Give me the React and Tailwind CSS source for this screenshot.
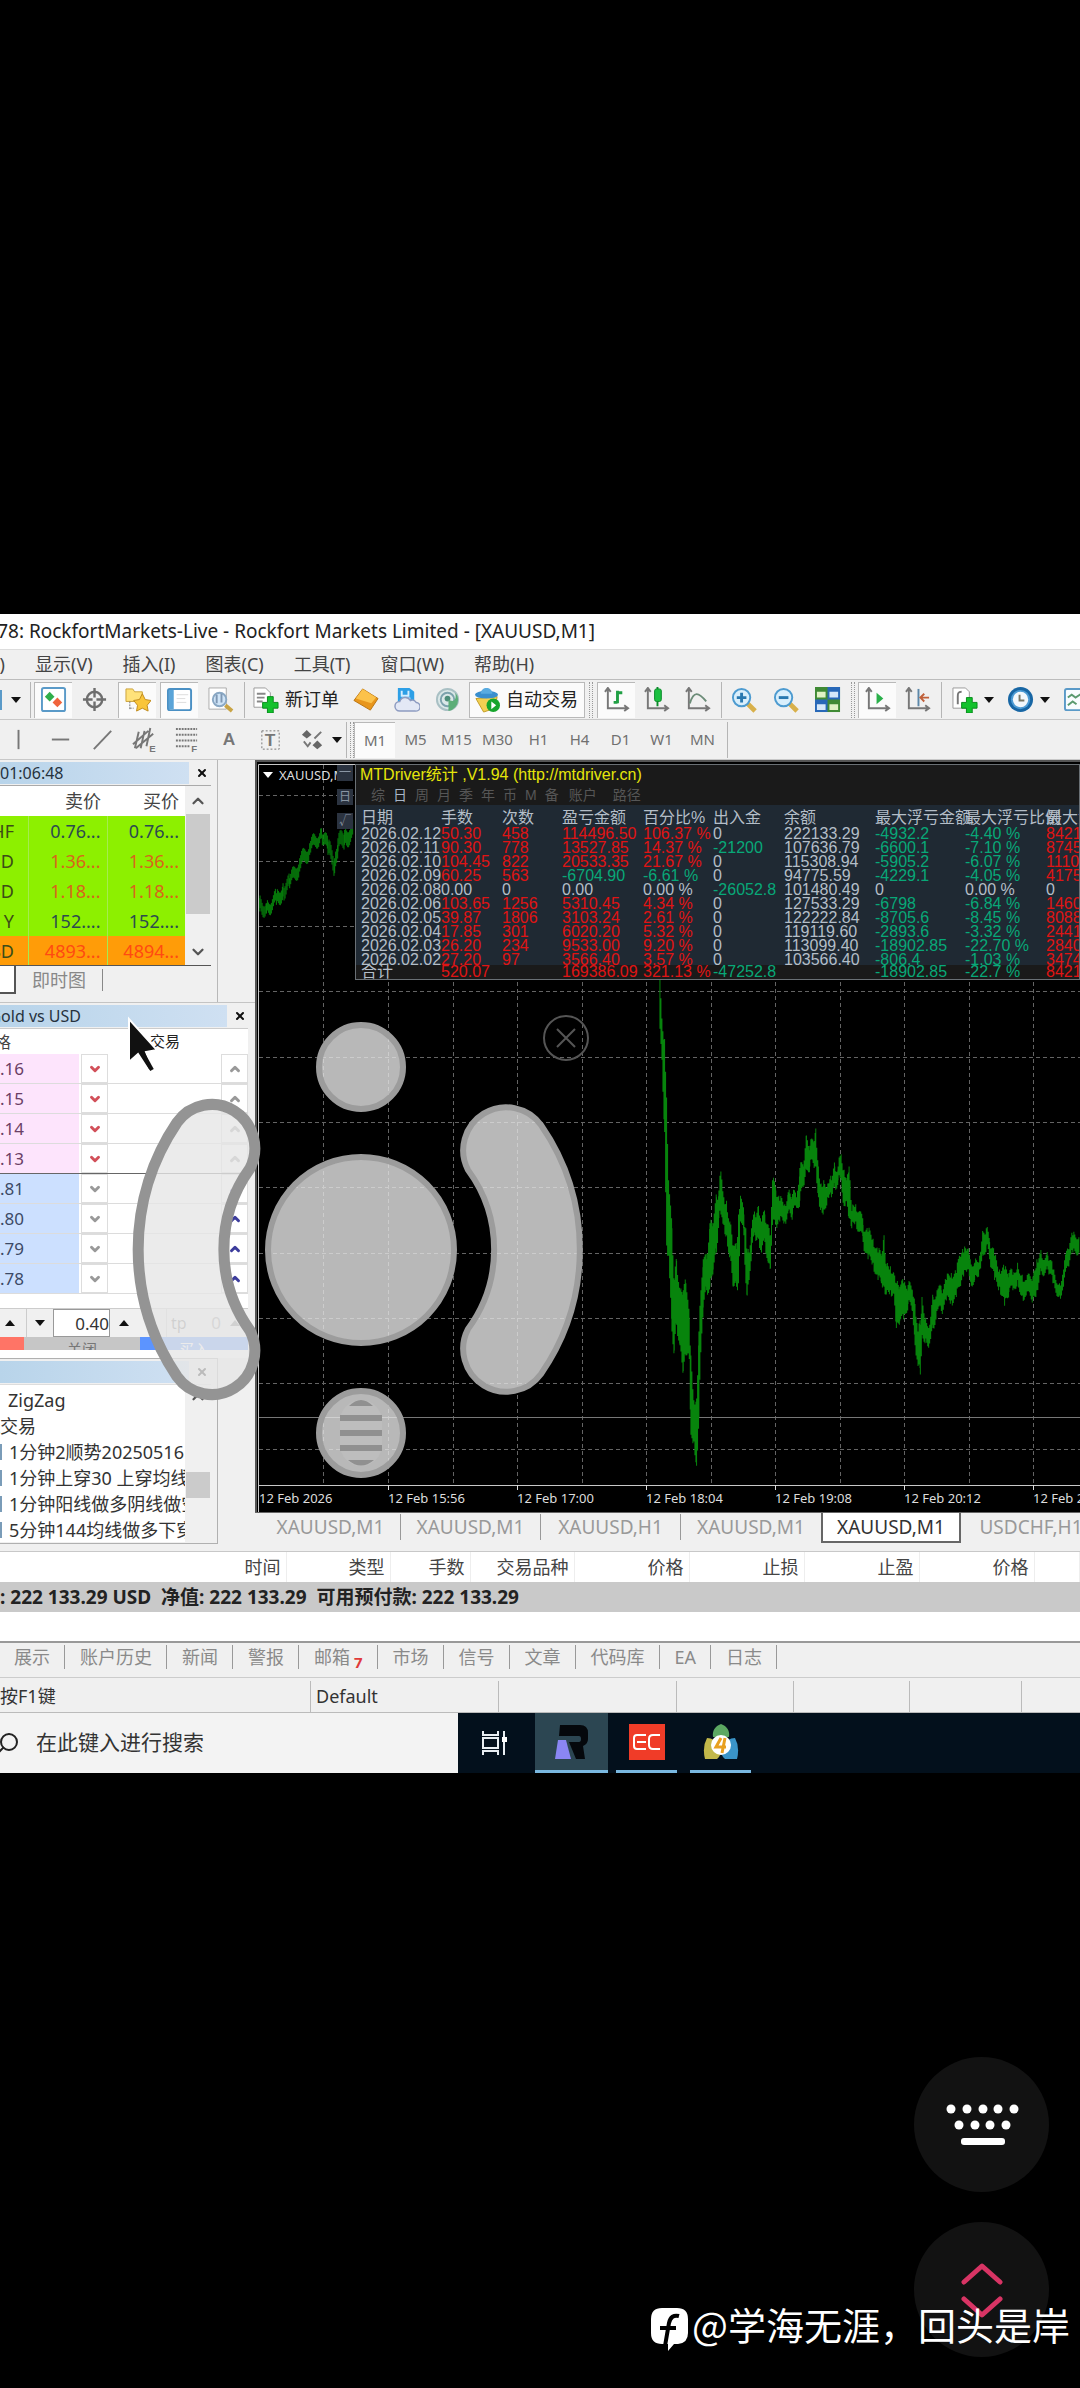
import { ChevronDown, ChevronUp, Search, X } from "lucide-react";

const STATS_HEAD = ["日期", "手数", "次数", "盈亏金额", "百分比%", "出入金", "余额", "最大浮亏金额", "最大浮亏比例", "最大浮盈"];

const STATS = [
    ["2026.02.12", "50.30", "458", "114496.50", "106.37 %", "0", "222133.29", "-4932.2", "-4.40 %", "8421"],
    ["2026.02.11", "90.30", "778", "13527.85", "14.37 %", "-21200", "107636.79", "-6600.1", "-7.10 %", "8745"],
    ["2026.02.10", "104.45", "822", "20533.35", "21.67 %", "0", "115308.94", "-5905.2", "-6.07 %", "1110"],
    ["2026.02.09", "60.25", "563", "-6704.90", "-6.61 %", "0", "94775.59", "-4229.1", "-4.05 %", "4175"],
    ["2026.02.08", "0.00", "0", "0.00", "0.00 %", "-26052.8", "101480.49", "0", "0.00 %", "0"],
    ["2026.02.06", "103.65", "1256", "5310.45", "4.34 %", "0", "127533.29", "-6798", "-6.84 %", "1460"],
    ["2026.02.05", "39.87", "1806", "3103.24", "2.61 %", "0", "122222.84", "-8705.6", "-8.45 %", "8088"],
    ["2026.02.04", "17.85", "301", "6020.20", "5.32 %", "0", "119119.60", "-2893.6", "-3.32 %", "2441"],
    ["2026.02.03", "26.20", "234", "9533.00", "9.20 %", "0", "113099.40", "-18902.85", "-22.70 %", "2840"],
    ["2026.02.02", "27.20", "97", "3566.40", "3.57 %", "0", "103566.40", "-806.4", "-1.03 %", "3474"],
];

const TOTAL = ["合计", "520.07", "", "169386.09", "321.13 %", "-47252.8", "", "-18902.85", "-22.7 %", "8421"];

// [x, high, low]
const OPENING = [
    [778, 430, 470], [800, 445, 475], [830, 415, 450], [850, 385, 425], [870, 370, 400], [900, 310, 350],
    [930, 265, 300], [965, 220, 250], [985, 260, 300], [1005, 310, 355], [1015, 250, 290], [1035, 225, 270], [1062, 205, 250],
];

const SESSION = [
    [180, 55, 200], [186, 170, 290], [194, 230, 500], [200, 400, 830], [206, 640, 860], [216, 780, 1080], [223, 930, 1135],
    [230, 875, 1060], [240, 960, 1120], [250, 960, 1195], [258, 940, 1150], [268, 1040, 1160], [273, 1150, 1380],
    [282, 1280, 1400], [290, 1275, 1470], [297, 1080, 1330], [303, 960, 1140], [310, 870, 1010], [320, 870, 960],
    [330, 765, 950], [340, 765, 900], [350, 690, 850], [357, 670, 750], [363, 615, 740], [372, 690, 770], [380, 700, 800],
    [390, 760, 860], [400, 830, 950], [410, 840, 950], [416, 740, 940], [422, 685, 760], [432, 740, 800], [438, 780, 940],
    [442, 850, 975], [448, 850, 930], [455, 780, 850], [465, 740, 800], [476, 715, 810], [485, 760, 850], [495, 740, 820],
    [505, 770, 880], [512, 800, 895], [518, 640, 770], [528, 670, 770], [540, 700, 760], [555, 710, 760], [565, 675, 730],
    [578, 680, 740], [590, 690, 720], [600, 605, 700], [610, 600, 660], [620, 510, 610], [630, 540, 600], [640, 530, 590],
    [648, 490, 600], [656, 600, 690], [664, 650, 720], [672, 640, 725], [684, 650, 690], [695, 640, 690], [705, 600, 660],
    [715, 600, 640], [724, 565, 640], [733, 610, 715], [740, 640, 700], [748, 600, 750], [756, 730, 780], [768, 710, 760],
    [780, 730, 790], [790, 770, 820], [805, 790, 870], [820, 810, 880], [835, 850, 930], [845, 860, 940], [853, 800, 950],
    [860, 890, 970], [872, 890, 960], [882, 910, 970], [890, 940, 1070], [900, 950, 1050], [912, 940, 1045], [925, 945, 1000],
    [938, 960, 1020], [946, 1000, 1120], [955, 1080, 1180], [962, 1060, 1205], [967, 980, 1090], [978, 1040, 1100],
    [990, 1060, 1115], [1000, 980, 1070], [1012, 960, 1020], [1025, 960, 1020], [1040, 930, 990], [1055, 910, 990],
    [1070, 910, 980], [1080, 860, 950], [1092, 850, 920], [1103, 840, 900], [1112, 870, 935], [1125, 880, 930],
    [1140, 860, 900], [1150, 790, 860], [1160, 780, 830], [1170, 820, 870], [1185, 860, 930], [1200, 900, 950],
    [1215, 900, 1005], [1228, 910, 965], [1240, 915, 960], [1254, 880, 930], [1268, 915, 975], [1280, 930, 975],
    [1300, 920, 985], [1312, 870, 960], [1325, 855, 905], [1345, 860, 900], [1360, 900, 940], [1380, 940, 975],
    [1392, 900, 950], [1405, 840, 890], [1420, 800, 850], [1440, 795, 840],
];

function bars(points) {
    let d = "";
    for (let i = 0; i < points.length - 1; i++) {
        const [x0, h0, l0] = points[i];
        const [x1, h1, l1] = points[i + 1];
        for (let x = x0; x < x1; x += 3) {
            const t = (x - x0) / (x1 - x0);
            const wave = x === x0 ? 0 : Math.sin(x * 2.3) * 16;
            d += `M${x} ${Math.round(h0 + (h1 - h0) * t + wave)}V${Math.round(l0 + (l1 - l0) * t + wave)}`;
        }
    }
    return d;
}

const V_LINES = [68, 133, 198, 262, 327, 391, 456, 520, 585, 649, 714, 778];
const H_LINES = [35, 101, 166, 231, 297, 362, 427, 493, 558, 623, 689];

function PriceChart() {
    return (
        <svg className="absolute inset-0 h-full w-full" viewBox="0 0 825 752" preserveAspectRatio="xMinYMin slice" fill="none">
            <g stroke="#646464" strokeDasharray="4 3">
                {V_LINES.map((x) => <path key={x} d={`M${x}.5 5V725`} />)}
                {H_LINES.map((y) => <path key={y} d={`M4 ${y}.5H1600`} />)}
            </g>
            <path d="M4 657.5H1600" stroke="#777" />
            <g stroke="#07840c" strokeWidth="3">
                <path transform="translate(-255 -5) scale(.333)" d={bars(OPENING)} />
                <path transform="translate(345 200) scale(.333 .344)" d={bars(SESSION)} />
            </g>
            <path d="M1 752V1H1600" stroke="#555" strokeWidth="2" />
            <path d="M3.5 752V4.5H1600M3.5 725.5H1600" stroke="#c8c8c8" />
            {[133, 262, 391, 520, 649, 778].map((x) => <path key={x} d={`M${x}.5 725v5`} stroke="#ddd" />)}
        </svg>
    );
}

function cellColor(value, col) {
    if (col === 0 || col === 6 || value === "0" || value.startsWith("0.00")) return "text-[#b4bec8]";
    if (value.startsWith("-")) return "text-[#08a878]";
    return "text-[#e01414]";
}

function Stats() {
    return (
        <div className="absolute top-[4px] right-0 left-[100px] h-[216px] overflow-hidden border border-[#6a7075] bg-[#1a1a1a] font-['Liberation_Sans','Noto_Sans_CJK_SC',sans-serif]">
            <a href="#stats" className="block h-5 pl-1 text-[16px] leading-5 whitespace-nowrap text-[#e6e60a]">
                MTDriver统计 ,V1.94 (http://mtdriver.cn)
            </a>
            <div className="flex h-5 items-center gap-2 pl-[15px] text-[14px] leading-5 text-[#565656]">
                {["综", "日", "周", "月", "季", "年", "币", "M", "备", "账户", "路径"].map((t) => (
                    <button key={t} className={t === "日" ? "text-[#a8b6c8]" : t === "账户" ? "ml-[2px]" : t === "路径" ? "ml-2" : ""}>{t}</button>
                ))}
            </div>
            <div className="h-[160px] overflow-hidden bg-[#1f2933] pt-1">
                <StatsTable head={STATS_HEAD} rows={STATS} />
            </div>
            <StatsTable rows={[TOTAL]} />
        </div>
    );
}

function StatsTable({ head, rows }) {
    return (
        <table className="ml-[5px] w-[770px] table-fixed text-left text-[16px] leading-[14px] whitespace-nowrap">
            <colgroup>
                <col className="w-[80px]" /><col className="w-[61px]" /><col className="w-[60px]" /><col className="w-[81px]" />
                <col className="w-[70px]" /><col className="w-[71px]" /><col className="w-[91px]" /><col className="w-[90px]" />
                <col className="w-[81px]" /><col />
            </colgroup>
            {head && (
                <thead>
                    <tr className="h-[18px] text-[#b4bec8]">
                        {head.map((h) => <th key={h} className="p-0 font-normal">{h}</th>)}
                    </tr>
                </thead>
            )}
            <tbody>
                {rows.map((r) => (
                    <tr key={r[0]} className="h-[14px]">
                        {r.map((v, i) => <td key={i} className={`p-0 ${cellColor(v, i)}`}>{v}</td>)}
                    </tr>
                ))}
            </tbody>
        </table>
    );
}

function Arrow({ up }) {
    return (
        <svg width="10" height="6" viewBox="0 0 10 6" className="shrink-0">
            <path d={up ? "M0 6L5 0L10 6Z" : "M0 0L5 6L10 0Z"} fill="#111" />
        </svg>
    );
}

function Sep() {
    return <span className="h-9 w-px shrink-0 bg-[#b5b5b5]" />;
}

function Grip() {
    return <span className="h-9 w-[4px] shrink-0 border-x border-dotted border-[#999]" />;
}

const ICONS = {
    watch: (
        <>
            <rect x="1" y="1" width="24" height="24" rx="2" fill="#fff" stroke="#5a9ac8" strokeWidth="2" />
            <path d="M9 5l5 5-5 5-5-5z" fill="#2fae4a" /><path d="M17 11l5 5-5 5-5-5z" fill="#f0643c" />
        </>
    ),
    cross: (
        <g fill="none" stroke="#6e6e6e" strokeWidth="2.5">
            <circle cx="13" cy="13" r="8" /><path d="M13 1v10M13 15v10M1 13h10M15 13h10" />
        </g>
    ),
    star: (
        <>
            <path d="M1 2h7l2 3h8v10H1z" fill="#ffe27a" stroke="#caa13a" />
            <path d="M5 15v9M5 22h4" stroke="#777" strokeDasharray="2 1" />
            <path d="M18 7l3 6 6 1-4 5 1 6-6-3-6 3 1-6-4-5 6-1z" fill="#f9c53a" stroke="#c08a1c" />
        </>
    ),
    terminal: (
        <>
            <rect x="1" y="2" width="24" height="22" rx="2" fill="#fff" stroke="#4a90c4" strokeWidth="2" />
            <path d="M2 3h5v20H2z" fill="#5aa4d8" /><path d="M10 8h12M10 12h9M10 16h10" stroke="#ddd" />
        </>
    ),
    tester: (
        <>
            <path d="M1 1h18v22H1z" fill="#fff" stroke="#aaa" />
            <circle cx="12" cy="13" r="7" fill="#cfe4f7" stroke="#8aa8c4" strokeWidth="2" />
            <path d="M9 8v9M14 7v9" stroke="#7f98b4" strokeWidth="2" /><path d="M18 19l7 6" stroke="#c9a445" strokeWidth="4" />
        </>
    ),
    order: (
        <>
            <path d="M1 1h12l5 5v15H1z" fill="#fff" stroke="#999" /><path d="M4 7h9M4 11h8M4 15h6" stroke="#888" strokeWidth="2" />
            <path d="M15 10h6v6h5v6h-5v5h-6v-5h-5v-6h5z" fill="#12c22c" stroke="#068a1a" />
        </>
    ),
    book: (
        <>
            <path d="M10 2l16 10-8 12L1 14z" fill="#e8961c" stroke="#b9740f" /><path d="M10 2l14 9-5 6L3 12z" fill="#fcc24a" />
        </>
    ),
    cloud: (
        <>
            <path d="M4 1h12l5 4v11H4z" fill="#2d9fe6" /><path d="M8 4v5h7V4M8 12h9" stroke="#d7efff" strokeWidth="2" fill="none" />
            <path d="M6 25a5 5 0 010-10 6 6 0 0111-1 5 5 0 016 2 4 4 0 01-1 9z" fill="#e3e8f5" stroke="#8d9bc0" strokeWidth="1.5" />
        </>
    ),
    signal: (
        <g fill="none" strokeWidth="2">
            <circle cx="13" cy="13" r="11" fill="#dbe8e8" stroke="#a9c0c4" /><circle cx="13" cy="13" r="7" stroke="#7da3ad" />
            <circle cx="13" cy="12" r="3" fill="#4d8d7a" stroke="none" /><path d="M14 13v12a12 12 0 0010-12 10 10 0 00-3-7c2 9-3 10-7 7z" fill="#5cae78" stroke="none" />
        </g>
    ),
    auto: (
        <>
            <path d="M2 12l22-2-2 12-12 4z" fill="#f2d052" stroke="#c29b24" /><ellipse cx="13" cy="8" rx="12" ry="4" fill="#3a8fce" />
            <path d="M7 7c0-8 12-8 12 0z" fill="#59abe0" /><circle cx="20" cy="19" r="7" fill="#16a52c" /><path d="M18 15l5 4-5 4z" fill="#fff" />
        </>
    ),
    bar: (
        <>
            <path d="M4 2v20h20M1 5l3-4 3 4M21 19l4 3-4 3" fill="none" stroke="#777" strokeWidth="2" />
            <path d="M14 4v13M14 6h5M10 16h4" stroke="#21a045" strokeWidth="3" />
        </>
    ),
    candle: (
        <>
            <path d="M4 2v20h20M1 5l3-4 3 4M21 19l4 3-4 3" fill="none" stroke="#777" strokeWidth="2" />
            <path d="M14 0v20" stroke="#0a8a2a" strokeWidth="2" /><rect x="11" y="2" width="7" height="13" rx="2" fill="#1cc040" stroke="#0a8a2a" />
        </>
    ),
    line: (
        <>
            <path d="M4 2v20h20M1 5l3-4 3 4M21 19l4 3-4 3" fill="none" stroke="#777" strokeWidth="2" />
            <path d="M5 17C9 4 14 5 22 15" fill="none" stroke="#6c8c78" strokeWidth="2" />
        </>
    ),
    zoomIn: (
        <>
            <path d="M17 17l8 8" stroke="#d8b04a" strokeWidth="5" /><circle cx="11" cy="11" r="9" fill="#d9effc" stroke="#4d9bd0" strokeWidth="2" />
            <path d="M11 6v10M6 11h10" stroke="#2878b0" strokeWidth="3" />
        </>
    ),
    zoomOut: (
        <>
            <path d="M17 17l8 8" stroke="#d8b04a" strokeWidth="5" /><circle cx="11" cy="11" r="9" fill="#d9effc" stroke="#4d9bd0" strokeWidth="2" />
            <path d="M6 11h10" stroke="#2878b0" strokeWidth="3" />
        </>
    ),
    tiles: (
        <>
            <path d="M0 0h26v26H0z" fill="#3f8a34" /><path d="M13 0h13v13H13zM0 13h13v13H0z" fill="#2868b8" />
            <path d="M2 5h9v6H2zM15 18h9v6h-9z" fill="#dff2c4" /><path d="M15 5h9v6h-9zM2 18h9v6H2z" fill="#d6e8fa" />
        </>
    ),
    scroll: (
        <>
            <path d="M4 2v20h20M1 5l3-4 3 4M21 19l4 3-4 3" fill="none" stroke="#777" strokeWidth="2" /><path d="M12 6l7 6-7 6z" fill="#2ab04a" />
        </>
    ),
    shift: (
        <>
            <path d="M4 2v20h20M1 5l3-4 3 4M21 19l4 3-4 3" fill="none" stroke="#777" strokeWidth="2" />
            <path d="M14 2v18" stroke="#5c87a8" strokeWidth="2" /><path d="M25 11h-8M20 7l-4 4 4 4" stroke="#c0603a" strokeWidth="2" fill="none" />
        </>
    ),
    addChart: (
        <>
            <path d="M1 1h13l4 4v17H1z" fill="#fff" stroke="#999" /><path d="M10 5c-4 0-4 2-4 5v8" stroke="#777" strokeWidth="2" fill="none" />
            <path d="M15 11h6v5h5v6h-5v5h-6v-5h-5v-6h5z" fill="#12c22c" stroke="#068a1a" />
        </>
    ),
    clock: (
        <>
            <circle cx="13" cy="13" r="13" fill="#1766a4" /><circle cx="13" cy="13" r="10" fill="#4c9bd4" />
            <circle cx="13" cy="13" r="8" fill="#f2f8fc" /><path d="M12 8v6h5" stroke="#776" strokeWidth="2" fill="none" />
        </>
    ),
    template: (
        <>
            <rect x="1" y="2" width="24" height="22" rx="2" fill="#f8fcff" stroke="#5a9ac8" strokeWidth="2" />
            <path d="M4 11l4-3 4 3 6-4M4 19l5-4 4 3" stroke="#5a9a70" strokeWidth="2" fill="none" />
        </>
    ),
    vline: <path d="M13 3v20" stroke="#777" strokeWidth="2" />,
    hline: <path d="M4 13h18" stroke="#777" strokeWidth="2" />,
    trend: <path d="M4 23L22 4" stroke="#777" strokeWidth="2" />,
    channel: (
        <>
            <path d="M1 18L17 4M4 22L22 7M7 5L3 22M13 4L9 22M19 1L15 20" stroke="#777" strokeWidth="2" />
            <text x="18" y="26" fontSize="10" fontWeight="bold" fill="#777" fontFamily="Liberation Sans">E</text>
        </>
    ),
    fibo: (
        <>
            <path d="M2 2h22M2 8h22M2 14h22M2 20h15" stroke="#777" strokeWidth="2" strokeDasharray="2 1" />
            <text x="18" y="26" fontSize="10" fontWeight="bold" fill="#777" fontFamily="Liberation Sans">F</text>
        </>
    ),
    text: <text x="7" y="19" fontSize="18" fontWeight="bold" fill="#777" fontFamily="Liberation Sans">A</text>,
    label: (
        <>
            <rect x="4" y="4" width="18" height="19" fill="none" stroke="#777" strokeDasharray="2 2" />
            <text x="7" y="20" fontSize="18" fontWeight="bold" fill="#777" fontFamily="Liberation Sans">T</text>
        </>
    ),
    shapes: (
        <>
            <path d="M7 3l5 5-5 4-5-4z" fill="#666" /><path d="M18 14l5 5-5 4-5-4z" fill="#666" />
            <path d="M4 15l4 5 3-4M15 12l7-7" stroke="#777" strokeWidth="2" fill="none" />
        </>
    ),
};

function Tool({ icon, label, active }) {
    return (
        <button
            aria-label={label}
            className={`flex h-9 w-[38px] shrink-0 items-center justify-center ${active ? "border-t border-l border-[#b9b9b9] bg-[#fbfbfb]" : ""}`}
        >
            <svg width="26" height="26" viewBox="0 0 27 27">{ICONS[icon]}</svg>
        </button>
    );
}

function Toolbar() {
    return (
        <div className="flex h-10 items-center overflow-hidden border-t border-[#bcbcbc] text-[18px] whitespace-nowrap text-[#222]">
            <span className="h-5 w-[2px] shrink-0 bg-[#5a9ac8]" />
            <button aria-label="新建图表" className="flex w-7 shrink-0 justify-center"><Arrow /></button>
            <Sep />
            <div className="ml-[3px] flex gap-[4px]">
                <Tool icon="watch" label="市场报价" active />
                <Tool icon="cross" label="数据窗口" />
                <Tool icon="star" label="导航" active />
                <Tool icon="terminal" label="终端" active />
                <Tool icon="tester" label="策略测试" />
            </div>
            <span className="w-1 shrink-0" />
            <Sep />
            <button className="flex shrink-0 items-center gap-[6px] px-2">
                <svg width="26" height="26" viewBox="0 0 27 27">{ICONS.order}</svg>
                新订单
            </button>
            <div className="flex gap-[3px]">
                <Tool icon="book" label="MetaEditor" />
                <Tool icon="cloud" label="云端" />
                <Tool icon="signal" label="信号" />
            </div>
            <button className="ml-[2px] flex h-9 w-[116px] shrink-0 items-center gap-[6px] border border-[#b9b9b9] bg-[#fbfbfb] pl-1">
                <svg width="26" height="26" viewBox="0 0 27 27">{ICONS.auto}</svg>
                自动交易
            </button>
            <span className="w-1 shrink-0" />
            <Grip />
            <div className="ml-[4px] flex gap-[3px]">
                <Tool icon="bar" label="柱状图" active />
                <Tool icon="candle" label="阴阳烛" />
                <Tool icon="line" label="折线图" />
            </div>
            <span className="w-1 shrink-0" />
            <Sep />
            <div className="ml-[3px] flex gap-[4px]">
                <Tool icon="zoomIn" label="放大" />
                <Tool icon="zoomOut" label="缩小" />
                <Tool icon="tiles" label="平铺" />
            </div>
            <span className="w-1 shrink-0" />
            <Grip />
            <div className="ml-[3px] flex gap-[3px]">
                <Tool icon="scroll" label="自动滚动" active />
                <Tool icon="shift" label="图表平移" />
            </div>
            <span className="w-1 shrink-0" />
            <Sep />
            <span className="w-1 shrink-0" />
            <Tool icon="addChart" label="指标" /><Arrow />
            <span className="w-2 shrink-0" />
            <Tool icon="clock" label="周期" /><Arrow />
            <span className="w-2 shrink-0" />
            <Tool icon="template" label="模板" />
        </div>
    );
}

function DrawingBar() {
    return (
        <div className="flex h-[41px] items-center overflow-hidden border-y border-[#c8c8c8] text-[15px] text-[#707070]">
            <div className="flex gap-[4px]">
                <Tool icon="vline" label="垂直线" />
                <Tool icon="hline" label="水平线" />
                <Tool icon="trend" label="趋势线" />
                <Tool icon="channel" label="通道" />
                <Tool icon="fibo" label="斐波那契" />
                <Tool icon="text" label="文字" />
                <Tool icon="label" label="文字标签" />
                <Tool icon="shapes" label="箭头" />
            </div>
            <Arrow />
            <span className="w-1 shrink-0" />
            <Sep />
            <span className="w-[3px] shrink-0" />
            <Grip />
            <div className="flex">
                {["M1", "M5", "M15", "M30", "H1", "H4", "D1", "W1", "MN"].map((t, i) => (
                    <button key={t} className={`h-9 w-[41px] ${i === 0 ? "border-t border-l border-[#b9b9b9] bg-[#fbfbfb]" : ""}`}>{t}</button>
                ))}
            </div>
            <span className="w-1 shrink-0" />
            <Sep />
        </div>
    );
}

function PanelTitle({ children, label }) {
    return (
        <div className="flex h-[25px] items-center">
            <div className="flex h-[22px] flex-1 items-center bg-gradient-to-r from-[#b8d4ea] to-[#cfe0f2] text-[16px] text-[#26323e]">
                {children}
            </div>
            <button aria-label={label} className="mr-[9px] ml-[7px] text-[#111]"><X size={12} strokeWidth={4} /></button>
        </div>
    );
}

const QUOTES = [
    ["USDCHF", "HF", "0.76...", "0.76...", "bg-[#8df000] text-[#2c4a50]"],
    ["GBPUSD", "D", "1.36...", "1.36...", "bg-[#8df000] text-[#d8641c]"],
    ["EURUSD", "D", "1.18...", "1.18...", "bg-[#8df000] text-[#d8641c]"],
    ["USDJPY", "Y", "152....", "152....", "bg-[#8df000] text-[#2c4a50]"],
    ["XAUUSD", "SD", "4893...", "4894...", "bg-[#ff9c08] text-[#ff4a12]"],
];

function MarketWatch() {
    return (
        <section className="h-[242px] w-[218px] border-r border-[#b8b8b8]">
            <PanelTitle label="关闭市场报价">01:06:48</PanelTitle>
            <div className="mr-[6px] flex h-[181px] overflow-hidden border-t border-b border-t-[#aaa] border-b-[#555]">
                <table className="w-[185px] table-fixed bg-white text-right text-[18px]">
                    <colgroup><col className="w-[28px]" /><col className="w-[79px]" /><col /></colgroup>
                    <thead>
                        <tr className="h-[30px] text-[#444]">
                            <th className="p-0" />
                            <th className="p-0 pr-[6px] font-normal">卖价</th>
                            <th className="p-0 pr-[6px] font-normal">买价</th>
                        </tr>
                    </thead>
                    <tbody>
                        {QUOTES.map(([id, name, bid, ask, tone]) => (
                            <tr key={id} className={`h-[30px] ${tone}`}>
                                <td className="p-0 whitespace-nowrap"><span className="flex w-[14px] justify-end text-[#3c4c18]">{name}</span></td>
                                <td className="border-l border-[#a4ec50] p-0 pr-[6px]">{bid}</td>
                                <td className="border-l border-[#a4ec50] p-0 pr-[6px]">{ask}</td>
                            </tr>
                        ))}
                    </tbody>
                </table>
                <div className="flex flex-1 flex-col items-center bg-[#f0f0f0] pt-[6px] pb-1 text-[#555]">
                    <ChevronUp size={18} strokeWidth={3} />
                    <div className="mt-1 h-[100px] w-6 bg-[#cbcbcb]" />
                    <span className="flex-1" />
                    <ChevronDown size={18} strokeWidth={3} />
                </div>
            </div>
            <div className="flex h-[28px] text-[18px] text-[#888]">
                <button className="w-4 border-r-2 border-b-2 border-[#555] bg-white" aria-label="交易品种" />
                <button className="px-4">即时图</button>
                <span className="h-[22px] w-px self-center bg-[#888]" />
            </div>
        </section>
    );
}

const DEPTH = ["4.16", "4.15", "4.14", "4.13", "3.81", "3.80", "3.79", "3.78"];

function Depth() {
    return (
        <section className="h-[356px] overflow-hidden border-t border-[#c4c4c4] bg-[#f0f0f0]">
            <PanelTitle label="关闭深度">
                <span className="flex w-[81px] justify-end whitespace-nowrap">Gold vs USD</span>
            </PanelTitle>
            <div className="mr-[7px] border-t border-[#ccc] bg-white text-[16px]">
                <div className="flex h-[25px] items-center text-[#444]">
                    <span className="flex w-[11px] justify-end whitespace-nowrap">价格</span>
                    <span className="flex-1 pr-[68px] text-right text-[15px] text-[#222]">交易</span>
                </div>
                {DEPTH.map((p, i) => (
                    <div key={p} className={`flex h-[30px] border-b ${i === 3 ? "border-[#666]" : "border-[#dcdcdc]"}`}>
                        <span className={`flex w-[79px] items-center text-[17px] ${i < 4 ? "bg-[#fde4fc] text-[#6b3f66]" : "bg-[#cce0ff] text-[#3c4a66]"}`}>
                            <span className="flex w-6 justify-end">{p}</span>
                        </span>
                        <button aria-label={`卖出 ${p}`} className={`ml-[2px] flex w-[27px] items-center justify-center border border-[#ddd] ${i < 4 ? "text-[#d2505a]" : "text-[#999]"}`}>
                            <ChevronDown size={14} strokeWidth={5} />
                        </button>
                        <span className="flex-1" />
                        <button aria-label={`买入 ${p}`} className={`flex w-[27px] items-center justify-center border border-[#ddd] ${i < 4 ? "text-[#999]" : "text-[#3c3c9c]"}`}>
                            <ChevronUp size={14} strokeWidth={5} />
                        </button>
                    </div>
                ))}
                <div className="h-[14px]" />
                <div className="flex h-[29px] items-center border-t border-[#ccc] bg-[#f0f0f0]">
                    <button aria-label="止损加" className="flex h-full w-[26px] items-center pl-[5px]"><Arrow up /></button>
                    <button aria-label="手数减" className="flex h-full w-[27px] items-center justify-center border-l border-[#ccc]"><Arrow /></button>
                    <input aria-label="手数" defaultValue="0.40" className="h-full w-[57px] border border-[#999] bg-white text-right text-[17px] text-[#333]" />
                    <button aria-label="手数加" className="flex h-full w-[28px] items-center justify-center"><Arrow up /></button>
                    <span className="w-7" />
                    <input aria-label="止盈" placeholder="tp" className="h-full w-[30px] border-l border-[#ccc] bg-[#f0f0f0] pl-1 text-[16px]" />
                    <span className="w-[25px] text-right text-[17px] text-[#999]">0</span>
                    <span className="flex flex-1 justify-center opacity-50"><Arrow up /></span>
                </div>
                <div className="flex h-[13px] overflow-hidden text-[15px] leading-[24px]">
                    <button aria-label="卖出" className="w-[24px] bg-[#ff7466]" />
                    <button className="w-[116px] bg-[#c6c6c6] text-[#777]">关闭</button>
                    <button className="flex-1 bg-[#5c94ff] text-[#fff]">买入</button>
                </div>
                <div className="h-2" />
            </div>
        </section>
    );
}

function Navigator() {
    return (
        <section className="h-[186px] w-[218px] border-t border-r border-b border-[#b0b0b0]">
            <PanelTitle label="关闭导航">&nbsp;</PanelTitle>
            <div className="mr-[6px] flex h-[158px] overflow-hidden border-t border-[#ddd]">
                <ul className="w-[185px] overflow-hidden bg-white pt-[2px] text-[18px] leading-[26px] whitespace-nowrap text-[#333]">
                    <li className="pl-2">ZigZag</li>
                    <li className="flex w-9 justify-end">EA交易</li>
                    {["1分钟2顺势20250516", "1分钟上穿30 上穿均线", "1分钟阳线做多阴线做空", "5分钟144均线做多下穿"].map((t) => (
                        <li key={t} className="flex items-center gap-[7px]">
                            <span className="h-4 w-[2px] shrink-0 bg-[#7a9cb8]" />{t}
                        </li>
                    ))}
                </ul>
                <div className="flex flex-1 flex-col items-center bg-[#f0f0f0] pt-[3px] text-[#555]">
                    <ChevronUp size={18} strokeWidth={3} />
                    <div className="mt-[66px] h-[26px] w-6 bg-[#cbcbcb]" />
                </div>
            </div>
        </section>
    );
}

function ChartPanel() {
    return (
        <div className="flex min-w-0 flex-1 flex-col">
            <div className="relative h-[752px] overflow-hidden bg-black">
                <PriceChart />
                <div className="absolute top-[6px] left-2 flex items-center gap-[6px] font-['Noto_Sans',sans-serif] text-[13px] leading-[18px] text-[#ddd]">
                    <svg width="10" height="6" viewBox="0 0 10 6"><path d="M0 0L5 6L10 0Z" fill="#fff" /></svg>
                    XAUUSD,M1
                </div>
                <div className="absolute top-[5px] left-[82px] flex flex-col gap-2 text-[12px] leading-4 text-[#8a96a4]">
                    {["一", "日", "√"].map((t) => (
                        <button key={t} className="h-4 w-4 bg-[#2b3340]">{t}</button>
                    ))}
                </div>
                <Stats />
                <div className="absolute right-0 bottom-[4px] left-[4px] flex h-5 overflow-hidden text-[13px] leading-5 whitespace-nowrap text-[#ddd]">
                    {["12 Feb 2026", "12 Feb 15:56", "12 Feb 17:00", "12 Feb 18:04", "12 Feb 19:08", "12 Feb 20:12", "12 Feb 21:16"].map((t) => (
                        <span key={t} className="w-[129px] shrink-0">{t}</span>
                    ))}
                </div>
            </div>
            <div className="flex h-[39px] overflow-hidden border-t border-[#666] pl-[6px] text-[19px] whitespace-nowrap text-[#999]">
                {["XAUUSD,M1", "XAUUSD,M1", "XAUUSD,H1", "XAUUSD,M1", "XAUUSD,M1", "USDCHF,H1"].map((t, i) => (
                    <button
                        key={i}
                        className={
                            i === 4
                                ? "h-[30px] w-[140px] shrink-0 border-x-2 border-b-2 border-[#666] bg-white leading-[26px] text-[#333]"
                                : `my-px h-[26px] w-[140px] shrink-0 leading-[26px] ${i < 3 ? "border-r border-[#999]" : ""}`
                        }
                    >
                        {t}
                    </button>
                ))}
            </div>
        </div>
    );
}

function Terminal() {
    return (
        <section className="border-t border-[#c8c8c8] bg-white">
            <table className="w-full table-fixed text-right text-[18px] whitespace-nowrap">
                <colgroup>
                    <col className="w-[286px]" /><col className="w-[104px]" /><col className="w-[80px]" /><col className="w-[104px]" />
                    <col className="w-[115px]" /><col className="w-[115px]" /><col className="w-[115px]" /><col className="w-[115px]" /><col />
                </colgroup>
                <thead>
                    <tr className="h-[30px] text-[#444]">
                        {["时间", "类型", "手数", "交易品种", "价格", "止损", "止盈", "价格", ""].map((h, i) => (
                            <th key={i} className="border-r border-[#eee] p-0 pr-[5px] font-normal">{h}</th>
                        ))}
                    </tr>
                </thead>
                <tbody>
                    <tr className="h-[30px] bg-[#c9c9c9]">
                        <td colSpan={9} className="p-0 text-left text-[19px] font-bold text-[#222]">
                            <span className="whitespace-pre">: 222 133.29 USD  净值: 222 133.29  可用预付款: 222 133.29</span>
                        </td>
                    </tr>
                </tbody>
            </table>
            <div className="h-[29px]" />
            <nav className="flex h-[37px] items-start gap-px border-t-2 border-b border-t-[#999] border-b-[#ccc] bg-[#f0f0f0] pt-[2px] text-[18px] text-[#8a8a8a]">
                {["展示", "账户历史", "新闻", "警报", "邮箱", "市场", "信号", "文章", "代码库", "EA", "日志"].map((t) => (
                    <button key={t} className="h-6 border-r border-[#999] px-[14px] leading-6 whitespace-nowrap">
                        {t}
                        {t === "邮箱" && <sub className="pl-1 text-[15px] font-bold text-[#e03a3a]">7</sub>}
                    </button>
                ))}
            </nav>
        </section>
    );
}

function StatusBar() {
    return (
        <footer className="flex h-[35px] items-end border-b border-[#bbb] bg-[#f0f0f0] text-[18px] leading-[30px] whitespace-nowrap text-[#333]">
            <span className="flex h-[31px] w-[311px] border-r border-[#bbb]">按F1键</span>
            <span className="h-[31px] w-[188px] border-r border-[#bbb] pl-[5px]">Default</span>
            <span className="h-[31px] w-[177px]" />
            <span className="h-[31px] w-[118px] border-x border-[#bbb]" />
            <span className="h-[31px] w-[116px] border-r border-[#bbb]" />
            <span className="h-[31px] w-[112px] border-r border-[#bbb]" />
        </footer>
    );
}

function Taskbar() {
    return (
        <div className="flex h-[60px] items-stretch bg-[#03101c]">
            <label className="flex w-[458px] shrink-0 items-center bg-[#f3f3f3]">
                <Search size={24} strokeWidth={2} className="-ml-1 -scale-x-100 text-[#222]" />
                <input aria-label="搜索" placeholder="在此键入进行搜索" className="ml-4 w-[300px] text-[21px] outline-none placeholder:text-[#333]" />
            </label>
            <button aria-label="任务视图" className="flex w-[77px] items-center justify-center pr-1">
                <svg width="26" height="24" viewBox="0 0 26 24" fill="none" stroke="#e8eef2" strokeWidth="2">
                    <path d="M1 0v4h15V0M1 24v-4h15v4M1 7h15v10H1zM22 0v24" /><path d="M20 6h5v5h-5z" fill="#fff" stroke="none" />
                </svg>
            </button>
            <button aria-label="R" className="flex w-[73px] items-center justify-center border-b-3 border-[#7ab8e0] bg-[#2c4652]">
                <svg width="36" height="36" viewBox="0 0 36 36">
                    <path d="M6 1h20q8 0 8 8v6q0 5-5 7l2 13h-9L15 18h10q2 0 2-3t-2-3H5z" fill="#05080c" />
                    <path d="M4 16h8l5 19H1z" fill="#8a86f4" />
                </svg>
            </button>
            <button aria-label="EC" className="ml-2 flex w-[61px] items-center justify-center border-b-3 border-[#7ab8e0]">
                <svg width="36" height="36" viewBox="0 0 36 36" fill="none" stroke="#fff" strokeWidth="2">
                    <path d="M0 0h36v36H0z" fill="#f03c28" stroke="none" />
                    <path d="M17 11H8q-3 0-3 3v8q0 3 3 3h9M8 18h9M31 11h-7q-4 0-4 4v6q0 4 4 4h7" />
                </svg>
            </button>
            <button aria-label="MetaTrader 4" className="ml-[13px] flex w-[61px] items-center justify-center border-b-3 border-[#7ab8e0]">
                <svg width="36" height="36" viewBox="0 0 36 36">
                    <path d="M18 0c6 2 9 7 8 13H10C9 7 12 2 18 0z" fill="#5ca862" />
                    <path d="M4 14q8 0 12 8t-2 13H2q-3-12 2-21z" fill="#c2b84a" />
                    <path d="M32 14q-8 0-12 8t2 13h12q3-12-2-21z" fill="#3a94c8" />
                    <circle cx="18" cy="21" r="10" fill="#fff" />
                    <path d="M18 14l-5 9h10M22 14l-3 15" fill="none" stroke="#e8a020" strokeWidth="3" />
                </svg>
            </button>
        </div>
    );
}

const CRESCENT = "M541 1125A219 219 0 0 1 541 1374A43 43 0 0 1 468 1329A134 134 0 0 0 468 1170A43 43 0 0 1 541 1125Z";

function TouchPad() {
    return (
        <svg className="pointer-events-none absolute top-[1000px] left-0 h-[500px] w-[600px]" viewBox="0 1000 600 500" fill="#e6e6e6cc" stroke="#9c9c9c">
            <path d="M129 1019v43l9-8 11 17 4-2-7-17 11-2z" fill="#111" stroke="#fff" strokeWidth="2" />
            <path d="M142 1052l10 18" stroke="#111" strokeWidth="4" />
            <path d={CRESCENT} transform="matrix(-1 0 0 1.02 718 -25)" strokeWidth="11" stroke="#949494" />
            <path d={CRESCENT} strokeWidth="6" />
            <g strokeWidth="6">
                <circle cx="361" cy="1067" r="42" />
                <circle cx="361" cy="1250" r="93" />
                <circle cx="361" cy="1433" r="42" />
            </g>
            <g stroke="none">
                <rect x="340" y="1400" width="42" height="66" rx="21" fill="#bdbdbd" />
                <path d="M349 1406q12-12 24 0zM340 1415h42v6h-42zM340 1430h42v6h-42zM340 1445h42v6h-42zM348 1460h26q-13 11-26 0z" fill="#909090" />
            </g>
            <g fill="none" stroke="#555" strokeWidth="2">
                <circle cx="566" cy="1038" r="22" /><path d="M557 1029l18 18M575 1029l-18 18" />
            </g>
        </svg>
    );
}

export default function App() {
    return (
        <div className="relative min-h-screen overflow-hidden bg-black pt-[614px] font-['Noto_Sans','Noto_Sans_CJK_SC',sans-serif]">
            <main className="bg-[#f0f0f0]">
                <h1 className="flex h-[35px] bg-white text-[19px] leading-[35px] whitespace-nowrap text-[#222]">
                    <span className="flex w-[595px] justify-end">78: RockfortMarkets-Live - Rockfort Markets Limited - [XAUUSD,M1]</span>
                </h1>
                <nav className="flex h-[30px] items-center gap-[30px] border-t border-[#ddd] text-[18px] whitespace-nowrap text-[#444]">
                    <span className="flex w-[5px] justify-end">)</span>
                    {["显示(V)", "插入(I)", "图表(C)", "工具(T)", "窗口(W)", "帮助(H)"].map((t) => (
                        <button key={t}>{t}</button>
                    ))}
                </nav>
                <Toolbar />
                <DrawingBar />
                <div className="flex">
                    <aside className="w-[255px] shrink-0 overflow-hidden">
                        <MarketWatch />
                        <Depth />
                        <Navigator />
                    </aside>
                    <ChartPanel />
                </div>
                <Terminal />
                <StatusBar />
                <Taskbar />
            </main>

            <TouchPad />

            <div className="absolute right-[31px] bottom-[31px] flex flex-col gap-[30px]">
                <button aria-label="键盘" className="flex h-[135px] w-[135px] items-center justify-center rounded-full bg-[#121212]">
                    <svg width="74" height="42" viewBox="0 0 74 42" fill="#fff">
                        {[6, 22, 38, 53, 69].map((x) => <circle key={x} cx={x} cy="5" r="4.500" />)}
                        {[14, 30, 45, 61].map((x) => <circle key={x} cx={x} cy="21" r="4.500" />)}
                        <rect x="16" y="34" width="44" height="7" rx="3" />
                    </svg>
                </button>
                <button aria-label="展开" className="flex h-[135px] w-[135px] items-center justify-center rounded-full bg-[#121212]">
                    <svg width="42" height="56" viewBox="0 0 42 56" fill="none" stroke="#d83464" strokeWidth="5" strokeLinecap="round" strokeLinejoin="round">
                        <path d="M3 20L21 4L39 20M3 37L21 53L39 37" />
                    </svg>
                </button>
            </div>
            <div className="absolute right-[10px] bottom-[37px] flex items-end gap-1 font-['Noto_Sans_CJK_SC',sans-serif] text-[38px] leading-[54px] whitespace-nowrap text-white">
                <svg width="37" height="43" viewBox="0 0 37 43">
                    <path d="M11 0h15q11 0 11 11v14q0 10-10 11h-4l-6 7v-7h-6Q0 36 0 25V11Q0 0 11 0z" fill="#fff" />
                    <path d="M28 8q-8-2-10 7l-4 23M9 20h16" fill="none" stroke="#000" strokeWidth="4" />
                </svg>
                @学海无涯，回头是岸
            </div>
        </div>
    );
}
